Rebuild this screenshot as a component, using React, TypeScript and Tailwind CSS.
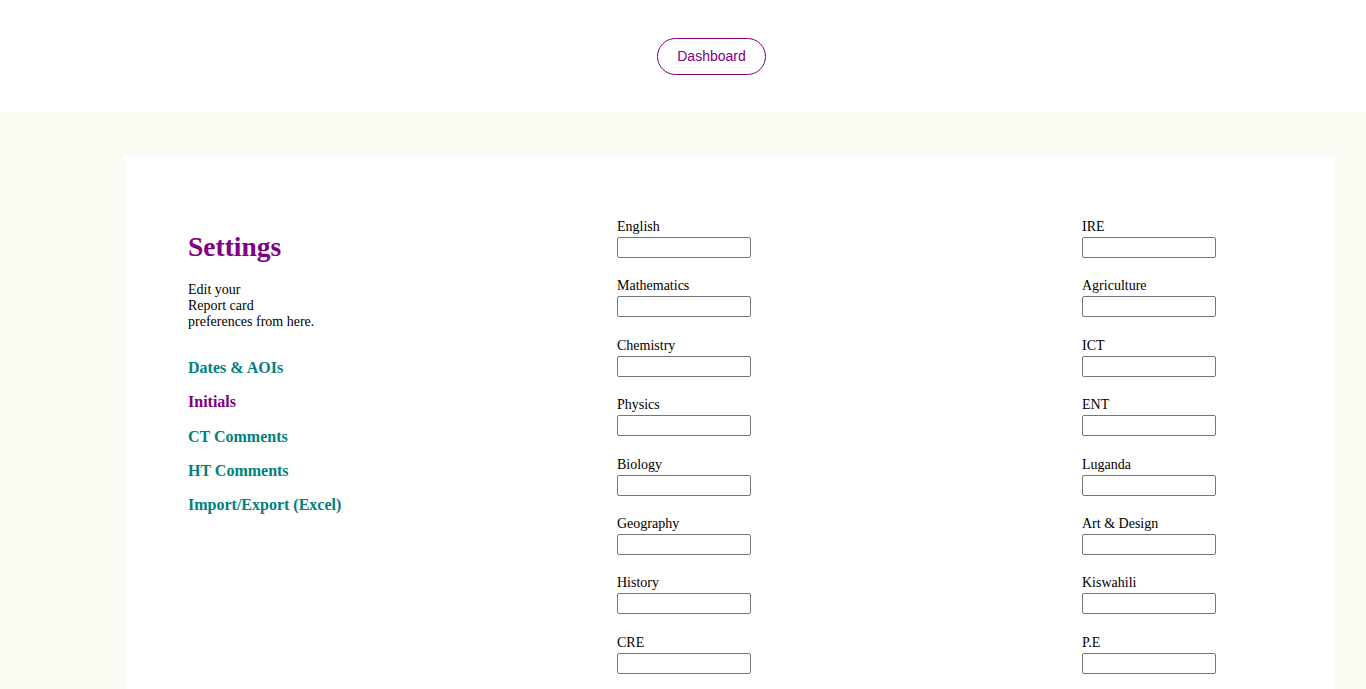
const leftSubjects = [
  "English",
  "Mathematics",
  "Chemistry",
  "Physics",
  "Biology",
  "Geography",
  "History",
  "CRE",
];

const rightSubjects = [
  "IRE",
  "Agriculture",
  "ICT",
  "ENT",
  "Luganda",
  "Art & Design",
  "Kiswahili",
  "P.E",
];

const links = [
  { label: "Dates & AOIs", active: false },
  { label: "Initials", active: true },
  { label: "CT Comments", active: false },
  { label: "HT Comments", active: false },
  { label: "Import/Export (Excel)", active: false },
];

function SubjectField({ name }: { name: string }) {
  return (
    <div className="flex flex-col">
      <label className="text-[14px] leading-[16px] text-black">{name}</label>
      <input
        type="text"
        className="mt-[2px] h-[21px] w-[134px] rounded-[2px] border border-[#767676] bg-white"
      />
    </div>
  );
}

export default function App() {
  return (
    <div className="min-h-screen bg-white font-['Liberation_Serif',serif] text-black">
      {/* Header */}
      <header className="flex h-[112px] items-start bg-white pt-[38px] pl-[657px]">
        <button className="h-[37px] w-[109px] rounded-full border border-[#800080] font-['Liberation_Sans',Arial,sans-serif] text-[14px] text-[#800080]">
          Dashboard
        </button>
      </header>

      {/* Body */}
      <main className="bg-[#f9fcf3] pt-[44px] pr-[31px] pb-[44px] pl-[125px]">
        <div className="flex bg-white pt-[63px] pb-[159px] pl-[63px]">
          {/* Sidebar */}
          <div className="w-[429px] shrink-0">
            <h1 className="mt-[12px] text-[27.5px] font-bold leading-[32px] text-[#800080]">
              Settings
            </h1>
            <p className="mt-[19px] text-[14px] leading-[16px]">
              Edit your
              <br />
              Report card
              <br />
              preferences from here.
            </p>
            <nav className="mt-[29px] flex flex-col gap-[16.3px]">
              {links.map((link) => (
                <a
                  key={link.label}
                  href="#"
                  className={
                    link.active
                      ? "text-[16px] font-bold leading-[18px] text-[#800080]"
                      : "text-[16px] font-bold leading-[18px] text-[#008080]"
                  }
                >
                  {link.label}
                </a>
              ))}
            </nav>
          </div>

          {/* Subjects */}
          <div className="flex w-[465px] shrink-0 flex-col gap-[20.4px]">
            {leftSubjects.map((s) => (
              <SubjectField key={s} name={s} />
            ))}
          </div>
          <div className="flex flex-col gap-[20.4px]">
            {rightSubjects.map((s) => (
              <SubjectField key={s} name={s} />
            ))}
          </div>
        </div>
      </main>
    </div>
  );
}
